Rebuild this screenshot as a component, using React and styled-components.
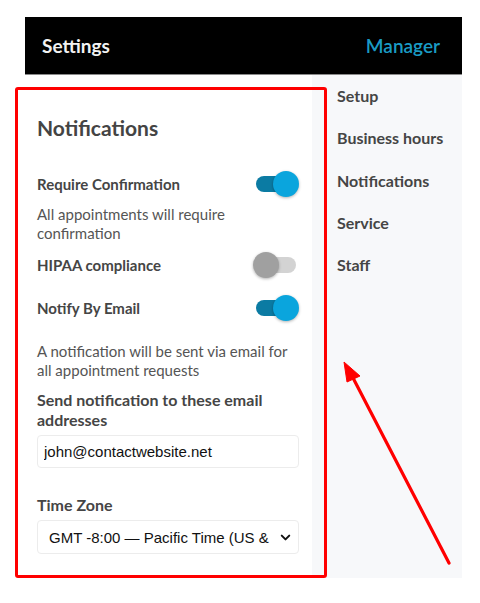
import React from "react";
import styled, { createGlobalStyle } from "styled-components";
import { ChevronDown } from "lucide-react";

const GlobalStyle = createGlobalStyle`
    html, body {
        margin: 0;
        padding: 0;
        background: #fff;
        font-family: Lato, "Open Sans", sans-serif;
    }
    * {
        box-sizing: border-box;
    }
`;

const Page = styled.div`
    position: relative;
    width: 480px;
    height: 603px;
    padding: 17px 18px 0 25px;
`;

const Frame = styled.div`
    width: 437px;
    display: flex;
    flex-direction: column;
`;

const Header = styled.header`
    height: 58px;
    background: #000;
    border-bottom: 1px solid #8a8a8a;
    display: flex;
    align-items: center;
    justify-content: space-between;
    padding: 0 22px 0 17px;
    font-size: 19px;
    font-weight: 700;

    span.title {
        color: #f2f2f2;
    }
    span.role {
        color: #1a9bc4;
        font-weight: 600;
    }
`;

const Body = styled.div`
    display: flex;
    height: 503px;
`;

const Main = styled.main`
    width: 287px;
    background: #fff;
    padding: 41px 13px 0 12px;
    display: flex;
    flex-direction: column;
`;

const Sidebar = styled.nav`
    flex: 1;
    background: #f7f8fa;
    padding: 11px 0 0 25px;
    display: flex;
    flex-direction: column;
`;

const NavItem = styled.a`
    display: block;
    height: 42.3px;
    line-height: 20px;
    font-size: 16px;
    font-weight: 700;
    color: #454545;
    text-decoration: none;
    cursor: pointer;
`;

const Title = styled.h2`
    margin: 0;
    font-size: 21px;
    line-height: 24px;
    font-weight: 700;
    color: #444;
`;

const Row = styled.div`
    display: flex;
    align-items: center;
    justify-content: space-between;
    height: 28px;
    margin-top: ${p => p.$gap}px;
`;

const Label = styled.div`
    font-size: ${p => p.$size || 15}px;
    line-height: 20px;
    font-weight: 700;
    color: #454545;
    margin-top: ${p => p.$gap || 0}px;
`;

const Desc = styled.p`
    margin: ${p => p.$gap}px 0 0;
    font-size: 15px;
    line-height: 19px;
    color: #555;
`;

const Track = styled.button`
    position: relative;
    width: 40px;
    height: 16px;
    margin-right: 3px;
    border: none;
    padding: 0;
    border-radius: 8px;
    background: ${p => (p.$on ? "#0b7ba3" : "#d3d3d3")};
    cursor: pointer;

    &::after {
        content: "";
        position: absolute;
        top: -5px;
        left: ${p => (p.$on ? "17px" : "-3px")};
        width: 26px;
        height: 26px;
        border-radius: 50%;
        background: ${p => (p.$on ? "#0aa5dd" : "#a0a0a0")};
        box-shadow: 0 1px 3px rgba(0, 0, 0, 0.3);
    }
`;

const Input = styled.input`
    width: 262px;
    height: 33px;
    margin-top: 5px;
    padding: 0 6px;
    border: 1px solid #ececec;
    border-radius: 4px;
    font-family: Arial, "Liberation Sans", sans-serif;
    font-size: 15px;
    color: #111;
    outline: none;
`;

const SelectWrap = styled.div`
    position: relative;
    width: 262px;
    margin-top: 5px;

    svg {
        position: absolute;
        right: 6px;
        top: 10px;
        pointer-events: none;
        color: #111;
    }
`;

const Select = styled.select`
    appearance: none;
    width: 100%;
    height: 34px;
    padding: 0 28px 0 11px;
    border: 1px solid #ececec;
    border-radius: 4px;
    background: #fff;
    font-family: Arial, "Liberation Sans", sans-serif;
    font-size: 15px;
    color: #111;
    outline: none;
`;

const Highlight = styled.div`
    position: absolute;
    left: 15px;
    top: 87px;
    width: 312px;
    height: 491px;
    border: 3px solid #ff0000;
    border-radius: 3px;
    pointer-events: none;
`;

const Arrow = styled.svg`
    position: absolute;
    left: 0;
    top: 0;
    pointer-events: none;
`;

const NAV = ["Setup", "Business hours", "Notifications", "Service", "Staff"];

export default function App() {
    return (
        <>
            <GlobalStyle />
            <Page>
                <Frame>
                    <Header>
                        <span className="title">Settings</span>
                        <span className="role">Manager</span>
                    </Header>
                    <Body>
                        <Main>
                            <Title>Notifications</Title>
                            <Row $gap={30}>
                                <Label>Require Confirmation</Label>
                                <Track $on aria-label="Require Confirmation" />
                            </Row>
                            <Desc $gap={7}>All appointments will require confirmation</Desc>
                            <Row $gap={8}>
                                <Label>HIPAA compliance</Label>
                                <Track aria-label="HIPAA compliance" />
                            </Row>
                            <Row $gap={15}>
                                <Label>Notify By Email</Label>
                                <Track $on aria-label="Notify By Email" />
                            </Row>
                            <Desc $gap={20}>A notification will be sent via email for all appointment requests</Desc>
                            <Label $size={16} $gap={10}>Send notification to these email addresses</Label>
                            <Input defaultValue="john@contactwebsite.net" />
                            <Label $size={16} $gap={27}>Time Zone</Label>
                            <SelectWrap>
                                <Select defaultValue="pst">
                                    <option value="pst">GMT -8:00 — Pacific Time (US &amp; Canada)</option>
                                </Select>
                                <ChevronDown size={15} strokeWidth={3.2} />
                            </SelectWrap>
                        </Main>
                        <Sidebar>
                            {NAV.map(item => <NavItem key={item}>{item}</NavItem>)}
                        </Sidebar>
                    </Body>
                </Frame>
                <Highlight />
                <Arrow width="480" height="603" viewBox="0 0 480 603">
                    <line x1="449" y1="563" x2="351" y2="374" stroke="#ff0000" strokeWidth="3.2" strokeLinecap="round" />
                    <polygon points="344,362 360,376 347,382" fill="#ff0000" stroke="#ff0000" strokeWidth="1" strokeLinejoin="round" />
                </Arrow>
            </Page>
        </>
    );
}
